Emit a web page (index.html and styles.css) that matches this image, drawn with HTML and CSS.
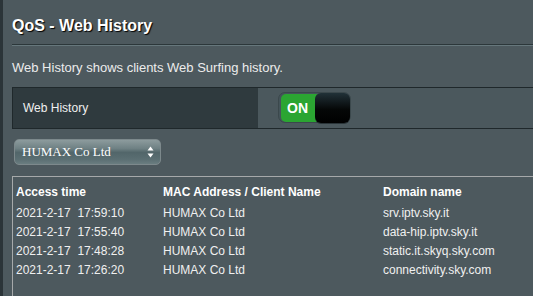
FILE: index.html
```html
<!DOCTYPE html>
<html>
<head>
<meta charset="utf-8">
<link rel="stylesheet" href="styles.css">
</head>
<body>
<div class="page">
  <div class="content">
    <h1 class="title">QoS - Web History</h1>
    <div class="divider"></div>
    <p class="desc">Web History shows clients Web Surfing history.</p>
    <div class="setting-row">
      <div class="setting-label">Web History</div>
      <div class="setting-value">
        <div class="toggle">
          <div class="toggle-on">ON</div>
          <div class="toggle-knob"></div>
        </div>
      </div>
    </div>
    <div class="select">
      <span class="select-text">HUMAX Co Ltd</span>
      <svg class="select-arrows" width="7" height="12" viewBox="0 0 7 12">
        <path d="M3.5 0.5 L6.5 4.5 L0.5 4.5 Z" fill="#fff"/>
        <path d="M3.5 11.5 L6.5 7.5 L0.5 7.5 Z" fill="#fff"/>
      </svg>
    </div>
    <div class="history-box">
      <table class="history">
        <thead>
          <tr><th class="c1">Access time</th><th class="c2">MAC Address / Client Name</th><th>Domain name</th></tr>
        </thead>
        <tbody>
          <tr><td>2021-2-17&nbsp;&nbsp;17:59:10</td><td>HUMAX Co Ltd</td><td>srv.iptv.sky.it</td></tr>
          <tr><td>2021-2-17&nbsp;&nbsp;17:55:40</td><td>HUMAX Co Ltd</td><td>data-hip.iptv.sky.it</td></tr>
          <tr><td>2021-2-17&nbsp;&nbsp;17:48:28</td><td>HUMAX Co Ltd</td><td>static.it.skyq.sky.com</td></tr>
          <tr><td>2021-2-17&nbsp;&nbsp;17:26:20</td><td>HUMAX Co Ltd</td><td>connectivity.sky.com</td></tr>
        </tbody>
      </table>
    </div>
  </div>
</div>
</body>
</html>
```

FILE: styles.css
```css
html, body {
  margin: 0;
  padding: 0;
  height: 100%;
  overflow: hidden;
  background: #4d595e;
  font-family: "Liberation Sans", Arial, sans-serif;
}

.page {
  height: 100%;
  border-left: 3px solid #2b3438;
  overflow: hidden;
}

.content {
  width: 760px;
  padding: 16px 0 0 9px;
}

.title {
  margin: 0;
  font-size: 16px;
  line-height: 20px;
  font-weight: bold;
  color: #fff;
  text-shadow: 1px 1px 1px #000;
}

.divider {
  margin-top: 8px;
  height: 0;
  border-top: 1px solid #2c373a;
  border-bottom: 1px solid #66777c;
}

.desc {
  margin: 14px 0 0;
  font-size: 13px;
  line-height: 16px;
  color: #ececec;
}

.setting-row {
  margin-top: 11px;
  display: flex;
  height: 40px;
  border-top: 1px solid #1f282b;
  border-bottom: 1px solid #1f282b;
}

.setting-label {
  width: 235px;
  padding-left: 10px;
  background: #2f3a3e;
  border-left: 1px solid #1f282b;
  color: #f0f0f0;
  font-size: 12px;
  display: flex;
  align-items: center;
}

.setting-value {
  flex: 1;
  background: #4b585d;
  padding-left: 20px;
  padding-top: 4px;
}

.toggle {
  width: 73px;
  height: 31px;
  box-sizing: border-box;
  border: 1px solid #3b484c;
  border-radius: 7px;
  background: #45545a;
  display: flex;
  align-items: center;
  padding-left: 2px;
}

.toggle-on {
  width: 37px;
  height: 28px;
  box-sizing: border-box;
  padding-left: 6px;
  background: #2ba532;
  border-radius: 5px 0 0 5px;
  color: #fff;
  font-weight: bold;
  font-size: 14px;
  display: flex;
  align-items: center;
}

.toggle-knob {
  margin-left: -3px;
  width: 35px;
  height: 30px;
  border-radius: 6px;
  background: linear-gradient(#213138, #050707 55%, #000);
  box-shadow: 0 1px 0 #2a3438;
}

.select {
  margin: 10px 0 0 2px;
  width: 147px;
  height: 26px;
  box-sizing: border-box;
  border: 1px solid #7d898c;
  border-radius: 5px;
  background: linear-gradient(#8c9b9d 0%, #6f8184 35%, #52666a 52%, #5a6e72 80%, #6a7d80 100%);
  display: flex;
  align-items: center;
  justify-content: space-between;
  padding: 0 6px 0 7px;
}

.select-text {
  font-family: "Liberation Serif", "Times New Roman", serif;
  font-size: 13px;
  color: #fff;
}

.select-arrows {
  display: block;
}

.history-box {
  margin-top: 11px;
  border: 1px solid #a6a9aa;
  height: 200px;
  padding: 6px 0 0 3px;
}

.history {
  border-collapse: collapse;
  color: #f0f0f0;
  font-size: 12px;
}

.history th {
  text-align: left;
  font-weight: bold;
  color: #fff;
  padding: 0;
  height: 21px;
  line-height: 19px;
  vertical-align: top;
}

.history td {
  padding: 0;
  height: 19px;
  line-height: 19px;
  white-space: nowrap;
}

.history .c1 { width: 147px; }
.history .c2 { width: 220px; }
```
